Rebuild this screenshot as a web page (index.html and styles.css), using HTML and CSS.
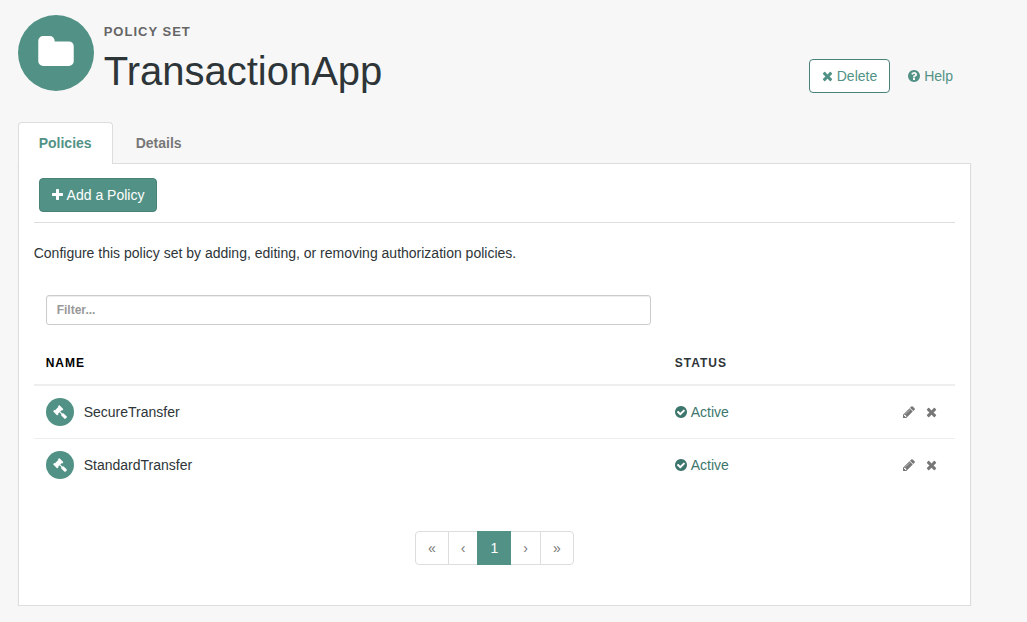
FILE: index.html
```html
<!DOCTYPE html>
<html lang="en">
<head>
<meta charset="utf-8">
<title>TransactionApp</title>
<link rel="stylesheet" href="styles.css">
</head>
<body>
<svg class="sprite" viewBox="0 0 1792 1792">
  <symbol id="times" viewBox="192 0 1408 1792"><path d="M1490 1322q0 40-28 68l-136 136q-28 28-68 28t-68-28l-294-294-294 294q-28 28-68 28t-68-28l-136-136q-28-28-28-68t28-68l294-294-294-294q-28-28-28-68t28-68l136-136q28-28 68-28t68 28l294 294 294-294q28-28 68-28t68 28l136 136q28 28 28 68t-28 68l-294 294 294 294q28 28 28 68z"/></symbol>
  <symbol id="plus" viewBox="192 0 1408 1792"><path d="M1600 736v192q0 40-28 68t-68 28h-416v416q0 40-28 68t-68 28h-192q-40 0-68-28t-28-68v-416h-416q-40 0-68-28t-28-68v-192q0-40 28-68t68-28h416v-416q0-40 28-68t68-28h192q40 0 68 28t28 68v416h416q40 0 68 28t28 68z"/></symbol>
  <symbol id="question" viewBox="128 0 1536 1792"><path d="M1024 1376v-192q0-14-9-23t-23-9h-192q-14 0-23 9t-9 23v192q0 14 9 23t23 9h192q14 0 23-9t9-23zm256-672q0-88-55.5-163t-138.5-116-170-41q-243 0-371 213-15 24 8 42l132 100q7 6 19 6 16 0 25-12 53-68 86-92 34-24 86-24 48 0 85.5 26t37.5 59q0 38-20 61t-68 45q-63 28-115.5 86.5t-52.5 125.5v36q0 14 9 23t23 9h192q14 0 23-9t9-23q0-19 21.5-49.5t54.5-49.5q32-18 49-28.5t46-35 44.5-48 28-60.5 12.5-81zm384 192q0 209-103 385.5t-279.5 279.5-385.5 103-385.5-103-279.5-279.5-103-385.5 103-385.5 279.5-279.5 385.5-103 385.5 103 279.5 279.5 103 385.5z"/></symbol>
  <symbol id="check" viewBox="128 0 1536 1792"><path d="M1412 734q0-28-18-46l-91-90q-19-19-45-19t-45 19l-408 407-226-226q-19-19-45-19t-45 19l-91 90q-18 18-18 46 0 27 18 45l362 362q19 19 45 19 27 0 46-19l543-543q18-18 18-45zm252 162q0 209-103 385.5t-279.5 279.5-385.5 103-385.5-103-279.5-279.5-103-385.5 103-385.5 279.5-279.5 385.5-103 385.5 103 279.5 279.5 103 385.5z"/></symbol>
  <symbol id="pencil" viewBox="128 0 1536 1792"><path d="M491 1536l91-91-235-235-91 91v107h128v128h107zm523-928q0-22-22-22-10 0-17 7l-542 542q-7 7-7 17 0 22 22 22 10 0 17-7l542-542q7-7 7-17zm-54-192l416 416-832 832h-416v-416zm683 96q0 53-37 90l-166 166-416-416 166-165q36-38 90-38 53 0 91 38l235 234q37 39 37 91z"/></symbol>
  <symbol id="folder" viewBox="64 128 1664 1408"><path d="M1728 608v704q0 92-66 158t-158 66h-1216q-92 0-158-66t-66-158v-960q0-92 66-158t158-66h320q92 0 158 66t66 158v32h672q92 0 158 66t66 158z"/></symbol>
  <symbol id="gavel" viewBox="0 0 1792 1792"><path d="M1771 1536q0 53-37 90l-107 108q-39 37-91 37-53 0-90-37l-363-364q-38-36-38-90 0-53 43-96l-256-256-126 126q-14 14-34 14t-34-14q2 2 12.5 12t12.5 13 10 11.5 10 13.5 6 13.5 5.5 16.5 1.5 18q0 38-28 68-3 3-16.5 18t-19 20.5-18.5 16.5-22 15.5-22 9-26 4.5q-40 0-68-28l-408-408q-28-28-28-68 0-13 4.5-26t9-22 15.5-22 16.5-18.5 20.5-19 18-16.5q30-28 68-28 10 0 18 1.5t16.5 5.5 13.5 6 13.5 10 11.5 10 13 12.5 12 12.5q-14-14-14-34t14-34l348-348q14-14 34-14t34 14q-2-2-12.5-12t-12.5-13-10-11.5-10-13.5-6-13.5-5.5-16.5-1.5-18q0-38 28-68 3-3 16.5-18t19-20.5 18.5-16.5 22-15.5 22-9 26-4.5q40 0 68 28l408 408q28 28 28 68 0 13-4.5 26t-9 22-15.5 22-16.5 18.5-20.5 19-18 16.5q-30 28-68 28-10 0-18-1.5t-16.5-5.5-13.5-6-13.5-10-11.5-10-13-12.5-12-12.5q14 14 14 34t-14 34l-126 126 256 256q43-43 96-43 52 0 91 37l363 363q37 39 37 91z"/></symbol>
</svg>
<div class="page">
  <header class="header">
    <div class="badge"><svg class="folder"><use href="#folder"/></svg></div>
    <div class="titles">
      <div class="eyebrow">POLICY SET</div>
      <h1 class="title">TransactionApp</h1>
    </div>
    <div class="actions">
      <button class="btn btn-outline"><svg class="icon w11"><use href="#times"/></svg>Delete</button>
      <a class="help"><svg class="icon w12"><use href="#question"/></svg>Help</a>
    </div>
  </header>
  <nav class="tabs">
    <a class="tab active">Policies</a>
    <a class="tab">Details</a>
  </nav>
  <main class="panel">
    <div class="toolbar">
      <button class="btn btn-primary"><svg class="icon w11"><use href="#plus"/></svg>Add a Policy</button>
    </div>
    <p class="intro">Configure this policy set by adding, editing, or removing authorization policies.</p>
    <input class="filter" type="text" placeholder="Filter...">
    <div class="table">
      <div class="row head">
        <div class="name-head">NAME</div>
        <div>STATUS</div>
      </div>
      <div class="row">
        <div class="name"><span class="dot"><svg class="icon w14"><use href="#gavel"/></svg></span>SecureTransfer</div>
        <div class="status"><svg class="icon w12"><use href="#check"/></svg>Active</div>
        <div class="tools"><svg class="icon w12"><use href="#pencil"/></svg><svg class="icon w11"><use href="#times"/></svg></div>
      </div>
      <div class="row">
        <div class="name"><span class="dot"><svg class="icon w14"><use href="#gavel"/></svg></span>StandardTransfer</div>
        <div class="status"><svg class="icon w12"><use href="#check"/></svg>Active</div>
        <div class="tools"><svg class="icon w12"><use href="#pencil"/></svg><svg class="icon w11"><use href="#times"/></svg></div>
      </div>
    </div>
    <nav class="pager">
      <a class="pg">«</a><a class="pg">‹</a><a class="pg current">1</a><a class="pg">›</a><a class="pg">»</a>
    </nav>
  </main>
</div>
</body>
</html>
```
FILE: styles.css
```css
* { box-sizing: border-box; }
body {
  margin: 0;
  background: #f7f7f7;
  color: #2e3538;
  font: 14px/20px "Liberation Sans", Arial, sans-serif;
}
.sprite { display: none; }
.page { width: 971px; padding: 15px 0 0 18px; }
.header { display: flex; height: 107px; }
.badge {
  width: 76px;
  height: 76px;
  border-radius: 50%;
  background: #529286;
  padding: 21px 0 0 20px;
  color: #fff;
}
.folder { display: block; width: 36px; height: 30px; fill: currentColor; }
.titles { margin-left: 9.7px; padding-top: 7px; }
.eyebrow { font-size: 13px; line-height: 20px; font-weight: bold; letter-spacing: 1px; color: #666; }
.title { margin: 6px 0 0; font-size: 40px; line-height: 46px; font-weight: normal; }
.actions { display: flex; align-items: center; margin: 44px 18px 0 auto; height: 34px; gap: 18px; }
.icon { height: 14px; fill: currentColor; flex: none; }
.w11 { width: 11px; }
.w12 { width: 12px; }
.w14 { width: 14px; }
.btn {
  display: flex;
  align-items: center;
  gap: 4px;
  height: 34px;
  padding: 0 12px;
  border-radius: 4px;
  font: 14px/20px "Liberation Sans", Arial, sans-serif;
}
.btn-outline { background: #fff; border: 1px solid #49827a; color: #529286; }
.btn-primary { gap: 3.9px; background: #529286; border: 1px solid #498277; color: #fff; }
.help { display: flex; align-items: center; gap: 4px; color: #529286; }
.tabs { display: flex; height: 42px; position: relative; margin: 0 0 -1px -.3px; }
.tab {
  padding: 10px 21.4px 11px;
  border: 1px solid transparent;
  border-bottom: 0;
  font-weight: bold;
  color: #777;
}
.tab.active { padding-left: 20px; padding-right: 20.7px; background: #fff; border-color: #ddd; border-radius: 4px 4px 0 0; color: #529286; }
.panel {
  height: 443px;
  margin-left: -.3px;
  padding: 14px 15px 0;
  background: #fff;
  border: 1px solid #ddd;
  box-shadow: 0 1px 1px rgba(0, 0, 0, .1);
}
.toolbar { padding: 0 5px 10px; border-bottom: 1px solid #ddd; }
.intro { margin: 20px 0 32px; }
.filter {
  display: block;
  width: 605px;
  height: 30px;
  margin-left: 12px;
  padding: 5px 10px;
  border: 1px solid #ccc;
  border-radius: 3px;
  box-shadow: inset 0 1px 1px rgba(0, 0, 0, .075);
  font: bold 12px/18px "Liberation Sans", Arial, sans-serif;
}
.filter::placeholder { color: #999; }
.table { margin-top: 15px; }
.row {
  display: grid;
  grid-template-columns: 629px 200px 1fr;
  align-items: center;
  height: 53px;
  padding: 0 18px 0 12px;
  border-top: 1px solid #eee;
}
.row.head {
  height: 45px;
  padding-top: 1px;
  border-top: 0;
  border-bottom: 1px solid #eee;
  font-size: 12px;
  font-weight: bold;
  letter-spacing: 1px;
}
.name-head { color: #000; }
.name { display: flex; align-items: center; gap: 10px; }
.dot { display: flex; align-items: center; justify-content: center; width: 28px; height: 28px; border-radius: 50%; background: #529286; color: #fff; }
.status { display: flex; align-items: center; gap: 4px; color: #3d766c; }
.tools { display: flex; align-items: center; justify-content: flex-end; gap: 11px; color: #777; }
.pager { display: flex; margin: 40px 0 0 381.3px; }
.pg {
  height: 34px;
  margin-left: -1px;
  padding: 6px 12px;
  border: 1px solid #ddd;
  color: #777;
}
.pg:first-child { margin-left: 0; border-radius: 4px 0 0 4px; }
.pg:last-child { border-radius: 0 4px 4px 0; }
.pg.current { position: relative; background: #529286; border-color: #529286; color: #fff; }
```
